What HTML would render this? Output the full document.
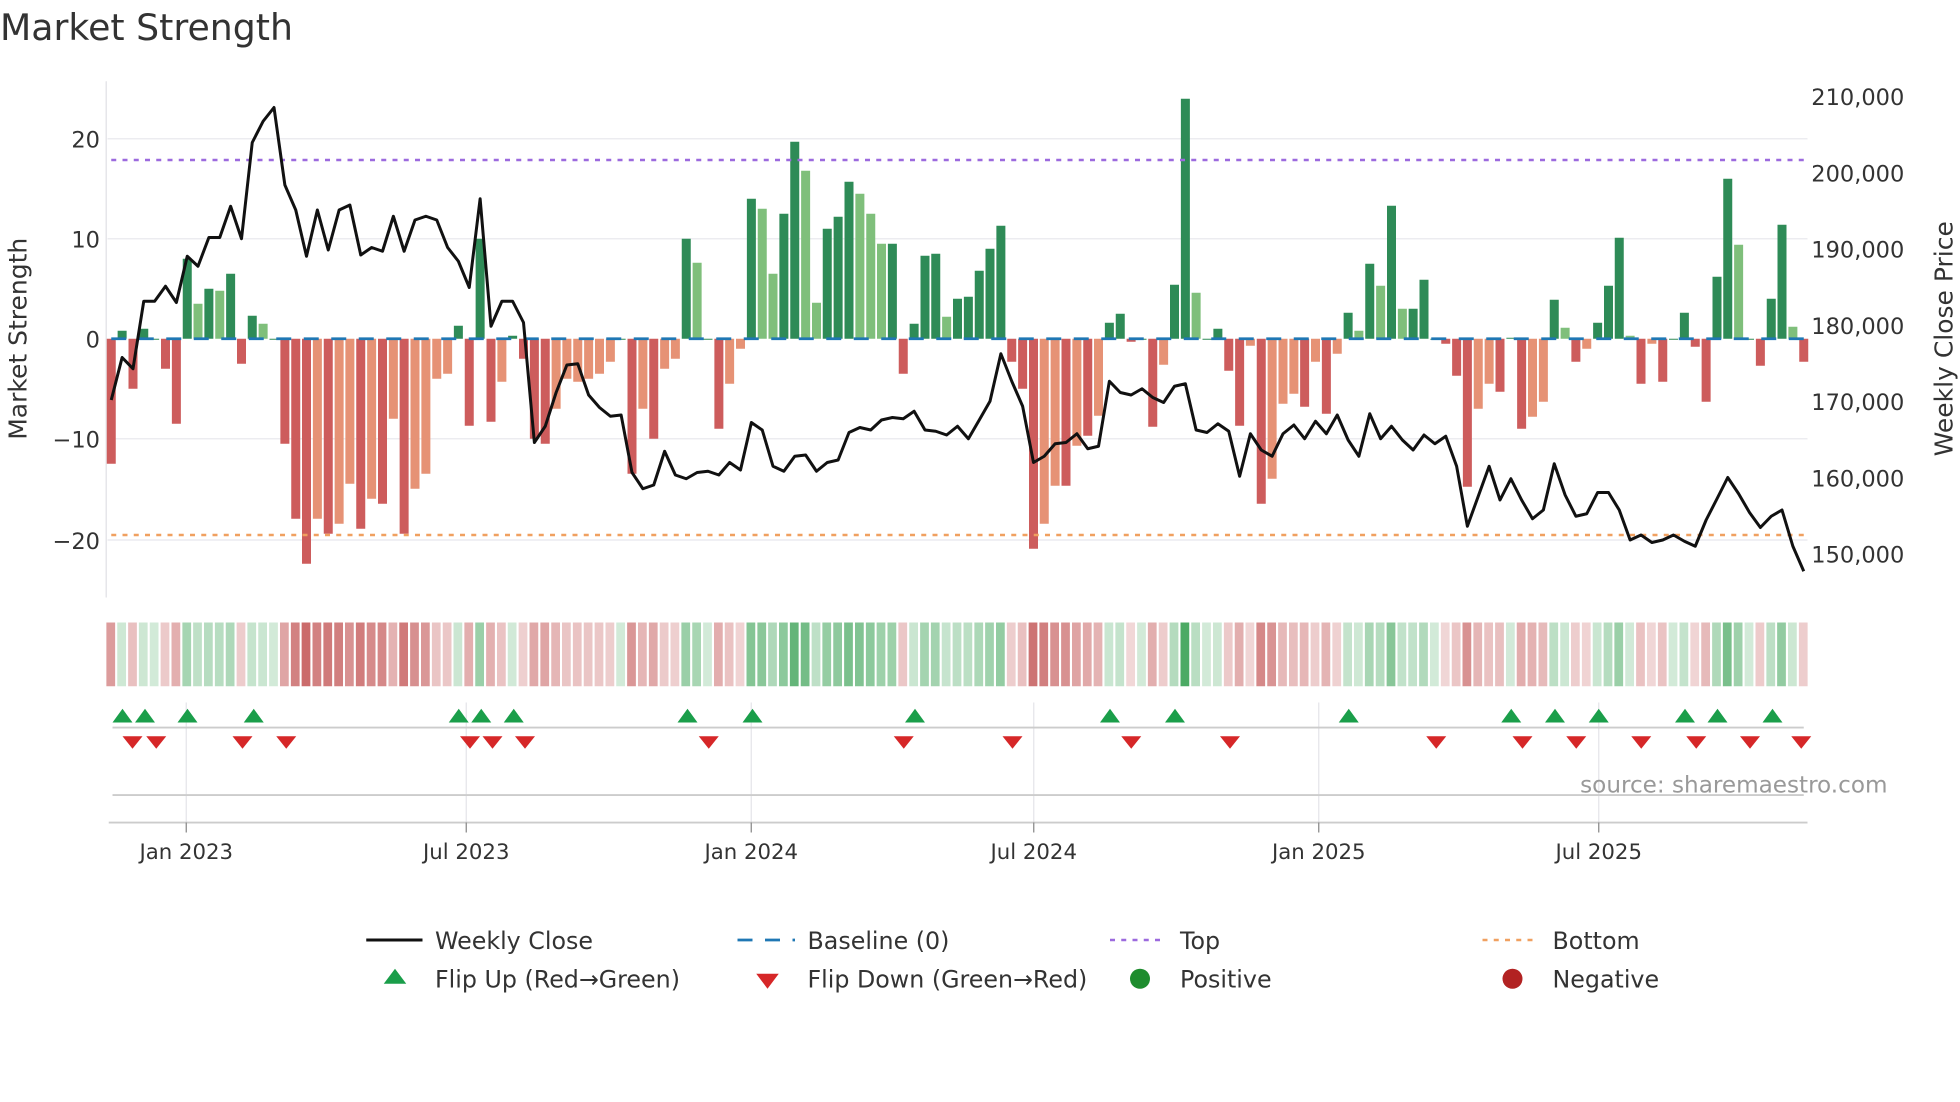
<!DOCTYPE html>
<html><head><meta charset="utf-8"><style>
html,body{margin:0;padding:0;background:#fff;width:1960px;height:1102px;overflow:hidden}
svg{display:block}
text{font-family:"DejaVu Sans","Liberation Sans",sans-serif;fill:#333}
</style></head><body>
<svg id="s" width="1960" height="1102" viewBox="0 0 1568 881.6" xmlns="http://www.w3.org/2000/svg">
<text x="0" y="32" font-size="29">Market Strength</text>
<g stroke="#ececf0" stroke-width="1.2">
<line x1="86" y1="111" x2="1446" y2="111"/><line x1="86" y1="191" x2="1446" y2="191"/>
<line x1="86" y1="351" x2="1446" y2="351"/><line x1="86" y1="432" x2="1446" y2="432"/>
</g>
<line x1="85" y1="65" x2="85" y2="478" stroke="#e6e6ea" stroke-width="1.2"/>
<g id="bars"></g>
<line x1="89" y1="271" x2="1444" y2="271" stroke="#1f77b4" stroke-width="2.2" stroke-dasharray="12,10"/>
<line x1="89" y1="128" x2="1444" y2="128" stroke="#9c6ade" stroke-width="2" stroke-dasharray="4,5"/>
<line x1="89" y1="428" x2="1444" y2="428" stroke="#f0a060" stroke-width="2" stroke-dasharray="4,5"/>
<polyline id="price" fill="none" stroke="#111" stroke-width="2.4" stroke-linejoin="round"/>
<g font-size="18" text-anchor="end">
<text x="80" y="118">20</text><text x="80" y="198">10</text><text x="80" y="278">0</text>
<text x="80" y="358">−10</text><text x="80" y="439">−20</text>
</g>
<g font-size="18">
<text x="1449" y="84">210,000</text><text x="1449" y="145">200,000</text><text x="1449" y="206">190,000</text>
<text x="1449" y="267">180,000</text><text x="1449" y="328">170,000</text><text x="1449" y="389">160,000</text>
<text x="1449" y="450">150,000</text>
</g>
<text transform="translate(21,271) rotate(-90)" font-size="20" text-anchor="middle">Market Strength</text>
<text transform="translate(1562,271) rotate(-90)" font-size="20" text-anchor="middle">Weekly Close Price</text>
<g id="heat"></g>
<g stroke="#e4e4ea" stroke-width="1">
<line x1="149" y1="562" x2="149" y2="658"/><line x1="373" y1="562" x2="373" y2="658"/>
<line x1="601" y1="562" x2="601" y2="658"/><line x1="827" y1="562" x2="827" y2="658"/>
<line x1="1055" y1="562" x2="1055" y2="658"/><line x1="1279" y1="562" x2="1279" y2="658"/>
</g>
<line x1="90" y1="582" x2="1443" y2="582" stroke="#ccc" stroke-width="1.5"/>
<line x1="90" y1="636" x2="1443" y2="636" stroke="#ccc" stroke-width="1.5"/>
<line x1="87" y1="658" x2="1446" y2="658" stroke="#ccc" stroke-width="1.5"/>
<g id="tri"></g>
<text x="1510" y="634" font-size="18.5" text-anchor="end" style="fill:#999">source: sharemaestro.com</text>
<g stroke="#888" stroke-width="1"><line x1="149" y1="658" x2="149" y2="666"/><line x1="373" y1="658" x2="373" y2="666"/><line x1="601" y1="658" x2="601" y2="666"/><line x1="827" y1="658" x2="827" y2="666"/><line x1="1055" y1="658" x2="1055" y2="666"/><line x1="1279" y1="658" x2="1279" y2="666"/></g>
<g font-size="17" text-anchor="middle">
<text x="149" y="687">Jan 2023</text><text x="373" y="687">Jul 2023</text><text x="601" y="687">Jan 2024</text>
<text x="827" y="687">Jul 2024</text><text x="1055" y="687">Jan 2025</text><text x="1279" y="687">Jul 2025</text>
</g>
<g font-size="19">
<line x1="293" y1="752" x2="338" y2="752" stroke="#111" stroke-width="2.4"/><text x="348" y="759">Weekly Close</text>
<line x1="590" y1="752" x2="636" y2="752" stroke="#1f77b4" stroke-width="2.2" stroke-dasharray="12,10"/><text x="646" y="759">Baseline (0)</text>
<line x1="888" y1="752" x2="932" y2="752" stroke="#9c6ade" stroke-width="2" stroke-dasharray="4,5"/><text x="944" y="759">Top</text>
<line x1="1186" y1="752" x2="1230" y2="752" stroke="#f0a060" stroke-width="2" stroke-dasharray="4,5"/><text x="1242" y="759">Bottom</text>
<polygon points="307,787 325,787 316,775" fill="#1a9e4a"/><text x="348" y="790">Flip Up (Red→Green)</text>
<polygon points="605,779 623,779 614,791" fill="#d62728"/><text x="646" y="790">Flip Down (Green→Red)</text>
<circle cx="912" cy="783" r="8" fill="#1e8c2e"/><text x="944" y="790">Positive</text>
<circle cx="1210" cy="783" r="8" fill="#b22222"/><text x="1242" y="790">Negative</text>
</g>
</svg>
<script>
var V=[[-12.5,1],[0.8,1],[-5,1],[1,1],[0,1],[-3,1],[-8.5,1],[8,1],[3.5,0],[5,1],[4.8,0],[6.5,1],[-2.5,1],[2.3,1],[1.5,0],[0,1],[-10.5,1],[-18,1],[-22.5,1],[-18,0],[-19.5,1],[-18.5,0],[-14.5,0],[-19,1],[-16,0],[-16.5,1],[-8,0],[-19.5,1],[-15,0],[-13.5,0],[-4,0],[-3.5,0],[1.3,1],[-8.7,1],[10,1],[-8.3,1],[-4.3,0],[0.3,1],[-2,1],[-10,1],[-10.5,1],[-7,0],[-4,0],[-4.3,0],[-4,0],[-3.5,0],[-2.3,0],[0,1],[-13.5,1],[-7,0],[-10,1],[-3,0],[-2,0],[10,1],[7.6,0],[0,1],[-9,1],[-4.5,0],[-1,0],[14,1],[13,0],[6.5,0],[12.5,1],[19.7,1],[16.8,0],[3.6,0],[11,1],[12.2,1],[15.7,1],[14.5,0],[12.5,0],[9.5,0],[9.5,1],[-3.5,1],[1.5,1],[8.3,1],[8.5,1],[2.2,0],[4,1],[4.2,1],[6.8,1],[9,1],[11.3,1],[-2.3,1],[-5,1],[-21,1],[-18.5,0],[-14.7,0],[-14.7,1],[-10.7,0],[-9.7,1],[-7.7,0],[1.6,1],[2.5,1],[-0.3,1],[0,1],[-8.8,1],[-2.6,0],[5.4,1],[24,1],[4.6,0],[0,1],[1,1],[-3.2,1],[-8.7,1],[-0.7,0],[-16.5,1],[-14,0],[-6.5,0],[-5.5,0],[-6.8,1],[-2.3,0],[-7.5,1],[-1.5,0],[2.6,1],[0.8,0],[7.5,1],[5.3,0],[13.3,1],[3,0],[3,1],[5.9,1],[0,1],[-0.5,1],[-3.7,1],[-14.8,1],[-7,0],[-4.5,0],[-5.3,1],[0.1,1],[-9,1],[-7.8,0],[-6.3,0],[3.9,1],[1.1,0],[-2.3,1],[-1,0],[1.6,1],[5.3,1],[10.1,1],[0.3,0],[-4.5,1],[-0.5,0],[-4.3,1],[0,1],[2.6,1],[-0.8,1],[-6.3,1],[6.2,1],[16,1],[9.4,0],[0,1],[-2.7,1],[4,1],[11.4,1],[1.2,0],[-2.3,1]];
var P=[320,286,295,241,241,229,242,205,213,190,190,165,191,114,97,86,148,168,205,168,200,168,164,204,198,201,173,201,176,173,176,198,209,230,159,261,241,241,258,354,341,314,292,291,316,326,333,332,378,391,388,361,380,383,378,377,380,370,376,338,344,373,377,365,364,377,370,368,346,342,344,336,334,335,329,344,345,348,341,351,336,321,283,305,325,370,365,355,354,347,359,357,305,314,316,311,318,322,309,307,344,346,339,345,381,347,360,365,347,340,351,337,347,332,352,365,331,351,341,352,360,348,355,349,373,421,397,373,400,383,400,415,408,371,396,413,411,394,394,408,432,428,434,432,428,433,437,416,399,382,395,410,422,413,408,437,457];
var n=V.length,step=(1443-89)/(n-1),b='',h='',pts=[];
function mix(c,t){return 'rgb('+c.map(function(x){return Math.round(255+(x-255)*t)}).join(',')+')'}
for(var i=0;i<n;i++){var x=89+i*step,v=V[i][0],d=V[i][1];
var col=v>=0?(d?'#2e8b57':'#7fbf7b'):(d?'#cd5c5c':'#e69275');
var y=271-v*8;b+='<rect x="'+(x-3.6).toFixed(1)+'" y="'+Math.min(y,271).toFixed(1)+'" width="7.2" height="'+Math.max(Math.abs(v*8),0.8).toFixed(1)+'" fill="'+col+'"/>';
var t=Math.min(1,0.25+Math.abs(v)/24*0.75);
var hc=v>=0?mix([76,170,100],t):mix([200,100,100],t);
h+='<rect x="'+(x-3.9).toFixed(1)+'" y="498" width="7" height="51" fill="'+hc+'"/>';
pts.push(x.toFixed(1)+','+P[i]);}
document.getElementById('bars').innerHTML=b;document.getElementById('heat').innerHTML=h;
document.getElementById('price').setAttribute('points',pts.join(' '));
var up=[98,116,150,203,367,385,411,550,602,732,888,940,1079,1209,1244,1279,1348,1374,1418],dn=[106,125,194,229,376,394,420,567,723,810,905,984,1149,1218,1261,1313,1357,1400,1441],tr='';
up.forEach(function(x){tr+='<polygon points="'+(x-8)+',578 '+(x+8)+',578 '+x+',567" fill="#1a9e4a"/>'});
dn.forEach(function(x){tr+='<polygon points="'+(x-8)+',589 '+(x+8)+',589 '+x+',599" fill="#d62728"/>'});
document.getElementById('tri').innerHTML=tr;
</script>
</body></html>
